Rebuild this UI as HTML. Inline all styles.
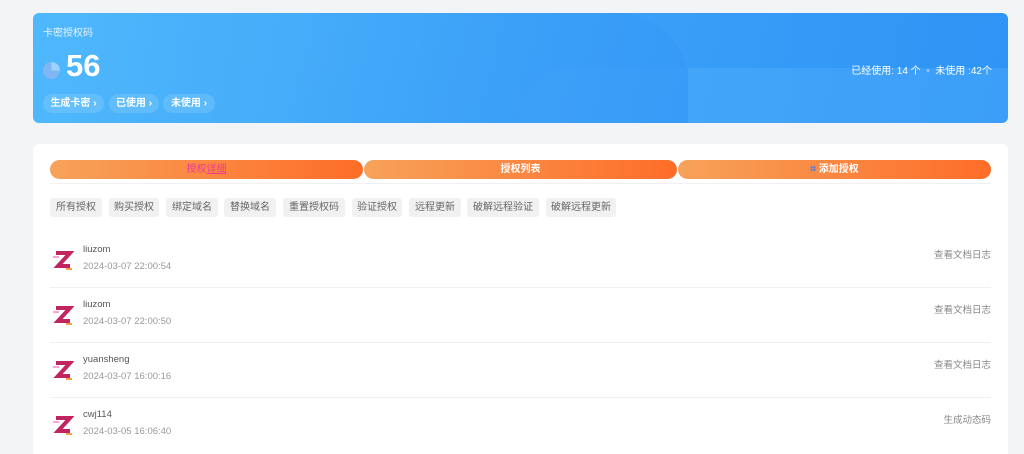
<!DOCTYPE html><html><head><meta charset="utf-8"><style>
*{margin:0;padding:0;box-sizing:border-box}
html,body{width:1024px;height:454px;overflow:hidden}
body{background:#f3f4f6;font-family:"Liberation Sans","Noto Sans CJK SC",sans-serif;position:relative}
.hero{position:absolute;left:33px;top:13px;width:975px;height:110px;border-radius:6px;overflow:hidden;background:linear-gradient(100deg,#4fb8fc 0%,#3ca2f8 50%,#2e94f6 100%)}
.sh1{position:absolute;left:0;top:0;width:655px;height:120px;border-radius:0 70px 0 0;background:linear-gradient(120deg,rgba(255,255,255,0) 40%,rgba(30,120,240,.10))}
.sh2{position:absolute;left:485px;top:55px;width:170px;height:80px;border-radius:50px 0 0 0;background:rgba(80,170,255,.12)}
.sh3{position:absolute;left:655px;top:55px;width:320px;height:60px;background:rgba(110,195,255,.22)}
.t1{position:absolute;left:10px;top:11px;color:#e6f3ff;font-size:10px}
.num{position:absolute;left:33px;top:35px;color:#fff;font-size:31px;font-weight:bold}
.pie{position:absolute;left:10px;top:49px;width:17px;height:17px;border-radius:50%;background:conic-gradient(#a8d6fb 0 25%,#86b6f2 25% 100%);opacity:.9}
.btn{position:absolute;top:81px;height:19px;border-radius:10px;background:rgba(255,255,255,.13);color:#fff;font-size:10px;font-weight:bold;line-height:19px;text-align:center}
.stat{position:absolute;right:16px;top:49px;color:#fff;font-size:10px}
.card{position:absolute;left:33px;top:144px;width:975px;height:330px;background:#fff;border-radius:6px}
.tab{position:absolute;top:16px;height:19px;width:313px;border-radius:10px;background:linear-gradient(90deg,#f7a25a,#fe6d28);color:#fff;font-size:10px;font-weight:bold;text-align:center;line-height:19px}
.line{position:absolute;left:17px;right:17px;height:1px;background:#f0f0f0}
.tag{position:absolute;top:54px;height:19px;background:#f1f1f1;border-radius:3px;color:#666;font-size:10px;line-height:19px;text-align:center}
.row{position:absolute;left:17px;width:941px;height:55px}
.ic{position:absolute;left:2px;top:5px;width:22px;height:22px}
.nm{position:absolute;left:33px;top:0px;font-size:9.5px;color:#555}
.dt{position:absolute;left:33px;top:17px;font-size:9.5px;color:#999}
.rt{position:absolute;right:0;top:3px;font-size:9.5px;color:#888}
</style></head><body>
<div class="hero"><div class="sh1"></div><div class="sh2"></div><div class="sh3"></div>
<div class="t1">卡密授权码</div><div class="pie"></div><div class="num">56</div>
<div class="btn" style="left:10px;width:61px">生成卡密 ›</div><div class="btn" style="left:76px;width:50px">已使用 ›</div><div class="btn" style="left:130px;width:52px">未使用 ›</div>
<div class="stat">已经使用: 14 个 &nbsp;<span style="opacity:.5">•</span>&nbsp; 未使用 :42个</div></div>
<div class="card">
<div class="tab" style="left:17px;color:#f0389a;font-weight:normal">授权<u>详细</u></div>
<div class="tab" style="left:331px">授权列表</div>
<div class="tab" style="left:645px"><span style="color:#5b7fd8">⌗</span> 添加授权</div>
<div class="line" style="top:39px"></div>
<div class="tag" style="left:17px;width:52px">所有授权</div><div class="tag" style="left:76px;width:50px">购买授权</div><div class="tag" style="left:133px;width:52px">绑定域名</div><div class="tag" style="left:191px;width:52px">替换域名</div><div class="tag" style="left:250px;width:62px">重置授权码</div><div class="tag" style="left:319px;width:50px">验证授权</div><div class="tag" style="left:376px;width:52px">远程更新</div><div class="tag" style="left:434px;width:72px">破解远程验证</div><div class="tag" style="left:513px;width:70px">破解远程更新</div>
<div class="row" style="top:100px"><svg class="ic" viewBox="0 0 22 22"><path d="M4 4h14L6 17h12" stroke="#c2245f" stroke-width="4" fill="none"/><rect x="1" y="7" width="6" height="2" fill="#f4a" opacity=".5"/><rect x="14" y="19" width="6" height="2" fill="#f5a04a"/></svg><div class="nm">liuzom</div><div class="dt">2024-03-07 22:00:54</div><div class="rt">查看文档日志</div></div>
<div class="line" style="top:143px"></div>
<div class="row" style="top:155px"><svg class="ic" viewBox="0 0 22 22"><path d="M4 4h14L6 17h12" stroke="#c2245f" stroke-width="4" fill="none"/><rect x="1" y="7" width="6" height="2" fill="#f4a" opacity=".5"/><rect x="14" y="19" width="6" height="2" fill="#f5a04a"/></svg><div class="nm">liuzom</div><div class="dt">2024-03-07 22:00:50</div><div class="rt">查看文档日志</div></div>
<div class="line" style="top:198px"></div>
<div class="row" style="top:210px"><svg class="ic" viewBox="0 0 22 22"><path d="M4 4h14L6 17h12" stroke="#c2245f" stroke-width="4" fill="none"/><rect x="1" y="7" width="6" height="2" fill="#f4a" opacity=".5"/><rect x="14" y="19" width="6" height="2" fill="#f5a04a"/></svg><div class="nm">yuansheng</div><div class="dt">2024-03-07 16:00:16</div><div class="rt">查看文档日志</div></div>
<div class="line" style="top:253px"></div>
<div class="row" style="top:265px"><svg class="ic" viewBox="0 0 22 22"><path d="M4 4h14L6 17h12" stroke="#c2245f" stroke-width="4" fill="none"/><rect x="1" y="7" width="6" height="2" fill="#f4a" opacity=".5"/><rect x="14" y="19" width="6" height="2" fill="#f5a04a"/></svg><div class="nm">cwj114</div><div class="dt">2024-03-05 16:06:40</div><div class="rt">生成动态码</div></div>
</div>
</body></html>
